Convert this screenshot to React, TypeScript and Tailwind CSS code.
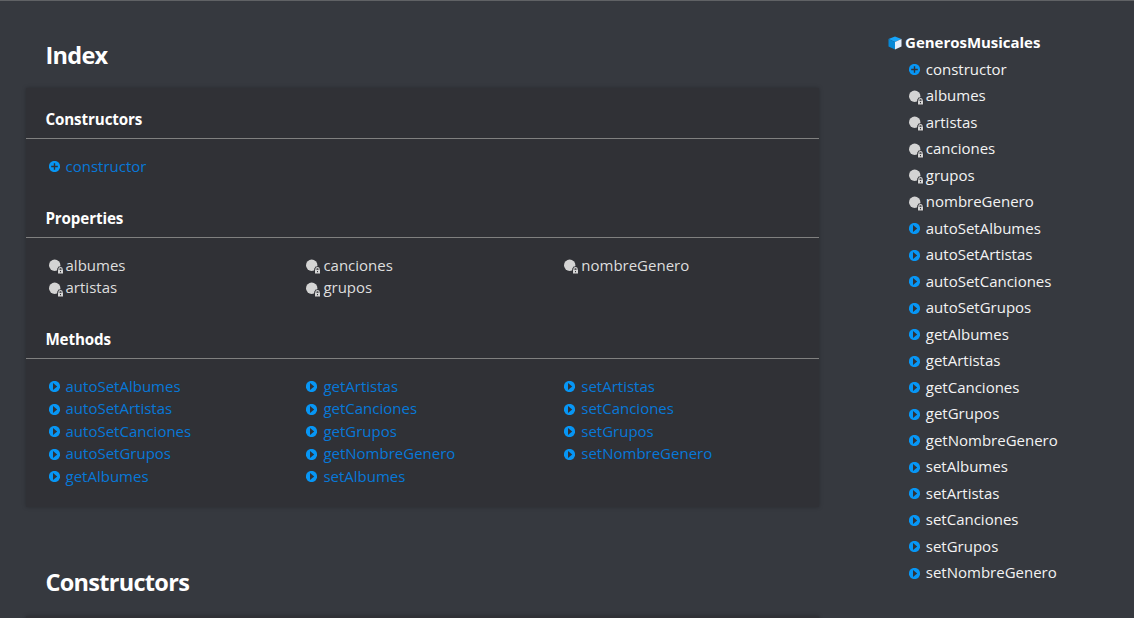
type Kind = "constructor" | "property" | "method";

function KindIcon({ kind }: { kind: Kind }) {
  if (kind === "property") {
    return (
      <svg className="mr-[2px] h-[15px] w-[15px] shrink-0 translate-y-[2px]" viewBox="0 0 15 15">
        <circle cx="5.7" cy="6.2" r="5.7" fill="#d4d4d4" />
        <path d="M8.2 15V9.7L9.6 7.4h3.8l1.6 2.3V15z" fill="#303136" />
        <rect x="9" y="10.8" width="5" height="3.7" fill="#d4d4d4" />
        <path d="M9.9 11V9.7q0-1.1 1.6-1.1t1.6 1.1V11" fill="none" stroke="#d4d4d4" strokeWidth="1.1" />
        <rect x="11" y="12" width="1" height="1.2" fill="#303136" />
      </svg>
    );
  }
  return (
    <svg className="mr-[6px] h-[11px] w-[11px] shrink-0 translate-y-[1px]" viewBox="0 0 11 11">
      <circle cx="5.5" cy="5.5" r="5.6" fill="#0796f5" />
      {kind === "constructor" ? (
        <path d="M4.8 2.2h1.4v2.6h2.6v1.4H6.2v2.6H4.8V6.2H2.2V4.8h2.6z" fill="#303136" />
      ) : (
        <path d="M4 2 8.2 5.5 4 9z" fill="#303136" />
      )}
    </svg>
  );
}

const properties = [["albumes", "artistas"], ["canciones", "grupos"], ["nombreGenero"]];
const methods = [
  ["autoSetAlbumes", "autoSetArtistas", "autoSetCanciones", "autoSetGrupos", "getAlbumes"],
  ["getArtistas", "getCanciones", "getGrupos", "getNombreGenero", "setAlbumes"],
  ["setArtistas", "setCanciones", "setGrupos", "setNombreGenero"],
];

function Section({ title, kind, columns }: { title: string; kind: Kind; columns: string[][] }) {
  return (
    <section>
      <h3 className="flex h-[39px] items-center border-b border-[#808080] pl-[19.4px] text-[15.2px] font-bold tracking-[-0.12px] text-white">
        {title}
      </h3>
      <div className="grid grid-cols-3 pt-[15.4px] pb-[1.6px] pl-[19.4px]">
        {columns.map((items) => (
          <ul key={items[0]}>
            {items.map((name) => (
              <li
                key={name}
                className={
                  kind === "property"
                    ? "flex h-[22.5px] items-center pl-[3.15px] text-[#dedede]"
                    : "flex h-[22.5px] items-center pl-[3.15px] text-[#0778d8]"
                }
              >
                <KindIcon kind={kind} />
                <a>{name}</a>
              </li>
            ))}
          </ul>
        ))}
      </div>
    </section>
  );
}

function Sidebar() {
  const rows: { name: string; kind: Kind }[] = [
    { name: "constructor", kind: "constructor" },
    ...properties.flat().map((name) => ({ name, kind: "property" as Kind })),
    ...methods.flat().map((name) => ({ name, kind: "method" as Kind })),
  ];
  return (
    <nav className="ml-[68.6px] pt-[28px] text-[#f3f3f3]">
      <div className="flex h-[26.5px] items-center font-bold text-white">
        <svg className="mr-[3.5px] h-[14px] w-[14px] shrink-0 translate-y-[1px]" viewBox="0 0 14 14">
          <path d="M7 .4 13.5 3 7 6.1.5 3z" fill="#16a4fa" />
          <path d="M.5 3 7 6.1v7.5L.5 10.5z" fill="#0788d6" />
          <path d="M7 6.1 13.5 3v7.5L7 13.6z" fill="#e4edfa" />
        </svg>
        <span className="tracking-[-0.03px]">GenerosMusicales</span>
      </div>
      <ul className="pl-[21.2px]">
        {rows.map(({ name, kind }) => (
          <li key={name} className="flex h-[26.5px] items-center">
            <KindIcon kind={kind} />
            <a>{name}</a>
          </li>
        ))}
      </ul>
    </nav>
  );
}

export default function App() {
  return (
    <div className="flex h-[618px] overflow-hidden border-t border-[#606265] bg-[#36393f] font-['Open_Sans','Noto_Sans',sans-serif] text-[15px] leading-[22px]">
      <main className="ml-[26px] w-[793px] shrink-0">
        <h2 className="flex h-[87px] items-center pt-[21px] pl-[19.4px] text-[23.5px] font-bold tracking-[-0.7px] text-white">Index</h2>
        <div className="h-[419px] bg-[#303136] pt-[12px] shadow-[0_0_4px_rgba(0,0,0,0.25)]">
          <Section title="Constructors" kind="constructor" columns={[["constructor"]]} />
          <div className="h-[20.5px]" />
          <Section title="Properties" kind="property" columns={properties} />
          <div className="h-5" />
          <Section title="Methods" kind="method" columns={methods} />
        </div>
        <h2 className="flex h-[109px] items-center pt-[41px] pl-[19.4px] text-[23.5px] font-bold tracking-[-0.7px] text-white">Constructors</h2>
        <div className="h-10 bg-[#303136] shadow-[0_0_4px_rgba(0,0,0,0.25)]" />
      </main>
      <Sidebar />
    </div>
  );
}
